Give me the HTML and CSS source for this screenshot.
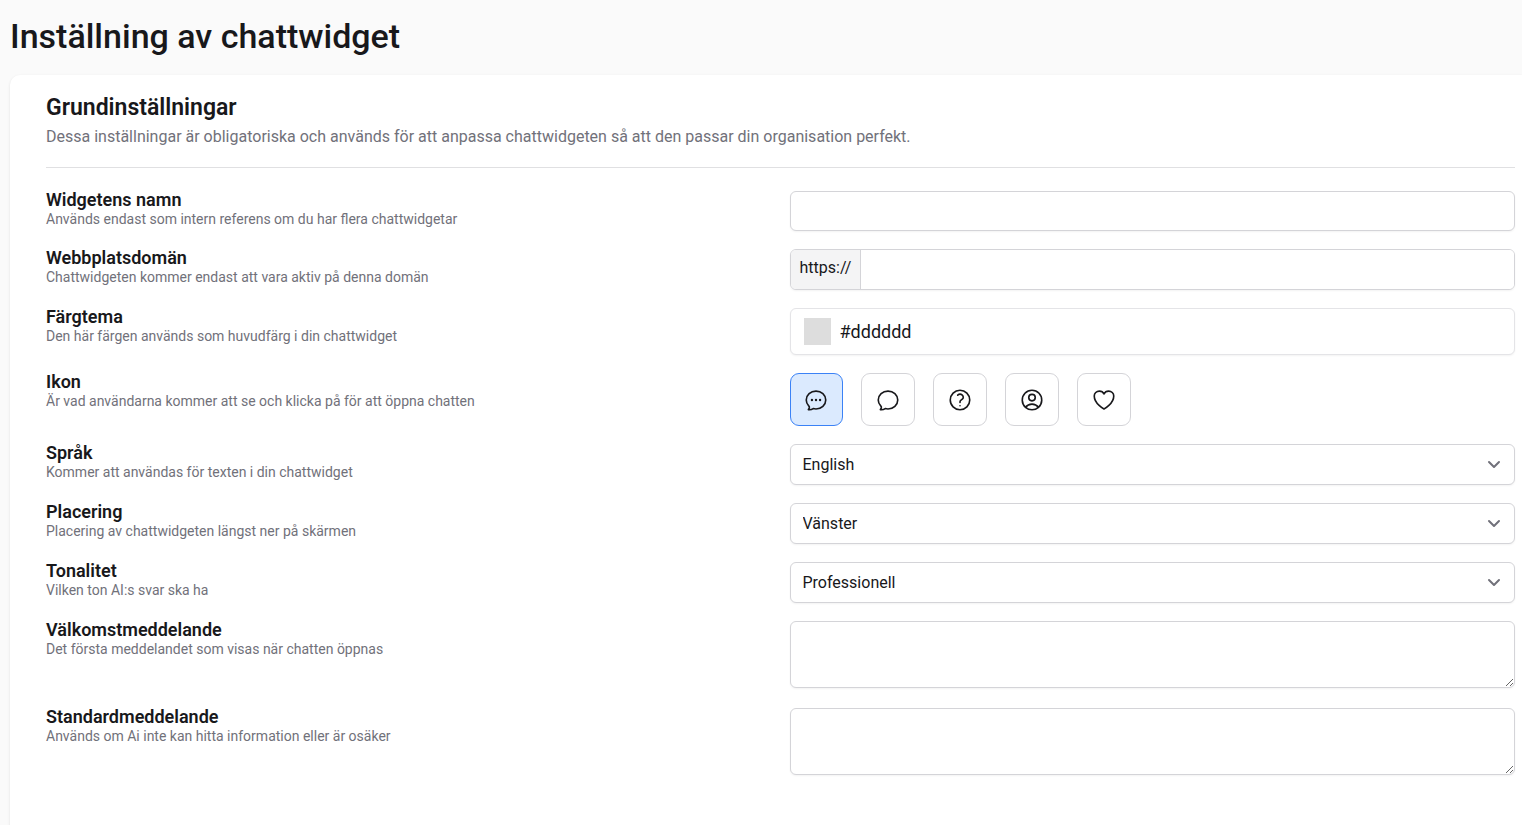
FILE: index.html
```html
<!DOCTYPE html>
<html lang="sv">
<head>
    <meta charset="UTF-8">
    <meta name="viewport" content="width=device-width, initial-scale=1.0">
    <title>Inställning av chattwidget</title>
    <link rel="stylesheet" href="styles.css">
</head>
<body>
    <h1>Inställning av chattwidget</h1>
    <form class="card">
        <div class="card-header">
            <h2>Grundinställningar</h2>
            <p>Dessa inställningar är obligatoriska och används för att anpassa chattwidgeten så att den passar din organisation perfekt.</p>
        </div>

        <div class="form-row">
            <div class="form-label">
                <label for="name">Widgetens namn</label>
                <p>Används endast som intern referens om du har flera chattwidgetar</p>
            </div>
            <input type="text" id="name" class="field">
        </div>

        <div class="form-row">
            <div class="form-label">
                <label for="domain">Webbplatsdomän</label>
                <p>Chattwidgeten kommer endast att vara aktiv på denna domän</p>
            </div>
            <div class="field url-field">
                <span class="prefix">https://</span>
                <input type="text" id="domain">
            </div>
        </div>

        <div class="form-row">
            <div class="form-label">
                <label for="color">Färgtema</label>
                <p>Den här färgen används som huvudfärg i din chattwidget</p>
            </div>
            <div class="field color-field">
                <input type="color" id="color" value="#dddddd">
                <span>#dddddd</span>
            </div>
        </div>

        <div class="form-row">
            <div class="form-label">
                <span class="label" id="iconLabel">Ikon</span>
                <p>Är vad användarna kommer att se och klicka på för att öppna chatten</p>
            </div>
            <div class="icons" role="radiogroup" aria-labelledby="iconLabel">
                <label class="icon-option">
                    <input type="radio" name="icon" value="chat-dots" aria-label="Chatt med punkter" checked>
                    <svg viewBox="0 0 24 24">
                        <path d="M12 20.25c4.97 0 9-3.694 9-8.25s-4.03-8.25-9-8.25S3 7.444 3 12c0 2.104.859 4.023 2.273 5.48.432.447.74 1.04.586 1.641a4.483 4.483 0 0 1-.923 1.785A5.969 5.969 0 0 0 6 21c1.282 0 2.47-.402 3.445-1.087.81.22 1.668.337 2.555.337Z"/>
                        <circle class="dot" cx="8.25" cy="12" r="1.1"/>
                        <circle class="dot" cx="12" cy="12" r="1.1"/>
                        <circle class="dot" cx="15.75" cy="12" r="1.1"/>
                    </svg>
                </label>
                <label class="icon-option">
                    <input type="radio" name="icon" value="chat" aria-label="Chatt">
                    <svg viewBox="0 0 24 24">
                        <path d="M12 20.25c4.97 0 9-3.694 9-8.25s-4.03-8.25-9-8.25S3 7.444 3 12c0 2.104.859 4.023 2.273 5.48.432.447.74 1.04.586 1.641a4.483 4.483 0 0 1-.923 1.785A5.969 5.969 0 0 0 6 21c1.282 0 2.47-.402 3.445-1.087.81.22 1.668.337 2.555.337Z"/>
                    </svg>
                </label>
                <label class="icon-option">
                    <input type="radio" name="icon" value="help" aria-label="Hjälp">
                    <svg viewBox="0 0 24 24">
                        <path d="M9.879 7.519c1.171-1.025 3.071-1.025 4.242 0 1.172 1.025 1.172 2.687 0 3.712-.203.179-.43.326-.67.442-.745.361-1.45.999-1.45 1.827v.75M21 12a9 9 0 1 1-18 0 9 9 0 0 1 18 0Zm-9 5.25h.008v.008H12v-.008Z"/>
                    </svg>
                </label>
                <label class="icon-option">
                    <input type="radio" name="icon" value="user" aria-label="Användare">
                    <svg viewBox="0 0 24 24">
                        <path d="M17.982 18.725A7.488 7.488 0 0 0 12 15.75a7.488 7.488 0 0 0-5.982 2.975m11.963 0a9 9 0 1 0-11.963 0m11.963 0A8.966 8.966 0 0 1 12 21a8.966 8.966 0 0 1-5.982-2.275M15 9.75a3 3 0 1 1-6 0 3 3 0 0 1 6 0Z"/>
                    </svg>
                </label>
                <label class="icon-option">
                    <input type="radio" name="icon" value="heart" aria-label="Hjärta">
                    <svg viewBox="0 0 24 24">
                        <path d="M21 8.25c0-2.485-2.099-4.5-4.688-4.5-1.935 0-3.597 1.126-4.312 2.733-.715-1.607-2.377-2.733-4.313-2.733C5.1 3.75 3 5.765 3 8.25c0 7.22 9 12 9 12s9-4.78 9-12Z"/>
                    </svg>
                </label>
            </div>
        </div>

        <div class="form-row">
            <div class="form-label">
                <label for="language">Språk</label>
                <p>Kommer att användas för texten i din chattwidget</p>
            </div>
            <div class="select-wrap">
                <select id="language" class="field">
                    <option>English</option>
                    <option>Svenska</option>
                </select>
                <svg viewBox="0 0 20 20"><path d="M5 8l5 5 5-5"/></svg>
            </div>
        </div>

        <div class="form-row">
            <div class="form-label">
                <label for="position">Placering</label>
                <p>Placering av chattwidgeten längst ner på skärmen</p>
            </div>
            <div class="select-wrap">
                <select id="position" class="field">
                    <option>Vänster</option>
                    <option>Höger</option>
                </select>
                <svg viewBox="0 0 20 20"><path d="M5 8l5 5 5-5"/></svg>
            </div>
        </div>

        <div class="form-row">
            <div class="form-label">
                <label for="tone">Tonalitet</label>
                <p>Vilken ton AI:s svar ska ha</p>
            </div>
            <div class="select-wrap">
                <select id="tone" class="field">
                    <option>Professionell</option>
                    <option>Vänlig</option>
                </select>
                <svg viewBox="0 0 20 20"><path d="M5 8l5 5 5-5"/></svg>
            </div>
        </div>

        <div class="form-row">
            <div class="form-label">
                <label for="welcome">Välkomstmeddelande</label>
                <p>Det första meddelandet som visas när chatten öppnas</p>
            </div>
            <textarea id="welcome" class="field"></textarea>
        </div>

        <div class="form-row">
            <div class="form-label">
                <label for="fallback">Standardmeddelande</label>
                <p>Används om Ai inte kan hitta information eller är osäker</p>
            </div>
            <textarea id="fallback" class="field"></textarea>
        </div>
    </form>
</body>
</html>
```
FILE: styles.css
```css
* {
    box-sizing: border-box;
}
body {
    font-family: Roboto, sans-serif;
    font-size: 16px;
    display: flex;
    flex-direction: column;
    min-height: 100vh;
    margin: 0;
    background-color: #fafafa;
    color: #18181b;
}
h1, h2, p {
    margin: 0;
}
h1 {
    font-size: 34px;
    font-weight: 500;
    line-height: 40px;
    padding: 16px 10px 19px;
}
.card {
    flex: 1;
    background: white;
    margin-left: 10px;
    padding: 18px 7px 50px 36px;
    border-radius: 10px 0 0 0;
    box-shadow: 0 1px 3px rgba(0,0,0,0.1);
}
.card-header {
    padding-bottom: 16px;
    margin-bottom: 23px;
    border-bottom: 1px solid #e0e0e2;
}
h2 {
    font-size: 23px;
    font-weight: 600;
    line-height: 30px;
}
.card-header p {
    line-height: 28px;
    color: #71717a;
}
.form-row {
    display: grid;
    grid-template-columns: 1fr 1fr;
    column-gap: 18px;
    align-items: start;
    margin-bottom: 18px;
}
.form-label label,
.label {
    display: block;
    font-size: 18px;
    font-weight: 600;
    line-height: 18px;
}
.form-label p {
    font-size: 14px;
    line-height: 20px;
    color: #71717a;
}
.field {
    display: block;
    width: 100%;
    height: 40px;
    margin: 0;
    padding: 0 12px;
    background: white;
    border: 1px solid #d4d4d8;
    border-radius: 6px;
    box-shadow: 0 1px 2px rgba(0,0,0,0.05);
    font: inherit;
    color: inherit;
}
.url-field {
    display: flex;
    height: 41px;
    padding: 0;
    overflow: hidden;
}
.prefix {
    padding: 8px 9px;
    line-height: 20px;
    background: #f4f4f5;
    border-right: 1px solid #d4d4d8;
}
.url-field input {
    flex: 1;
    min-width: 0;
    padding: 0 12px;
    border: none;
    font: inherit;
}
.color-field {
    display: flex;
    align-items: center;
    gap: 9px;
    height: 47px;
    padding: 0 13px;
    border-color: #e4e4e7;
    font-size: 18px;
}
.color-field input {
    appearance: none;
    width: 27px;
    height: 27px;
    padding: 0;
    border: none;
    background: none;
}
.color-field input::-webkit-color-swatch-wrapper {
    padding: 0;
}
.color-field input::-webkit-color-swatch {
    border: none;
}
.icons {
    display: flex;
    gap: 18px;
}
.icon-option {
    position: relative;
    display: flex;
    align-items: center;
    justify-content: center;
    width: 54px;
    height: 53px;
    border: 1px solid #d4d4d8;
    border-radius: 9px;
    cursor: pointer;
}
.icon-option:has(input:checked) {
    width: 53px;
    background: #dbeafe;
    border-color: #3b82f6;
}
.icon-option input {
    position: absolute;
    opacity: 0;
}
.icon-option svg {
    width: 26px;
    height: 26px;
    fill: none;
    stroke: currentColor;
    stroke-width: 1.5;
    stroke-linecap: round;
    stroke-linejoin: round;
}
.icon-option .dot {
    fill: currentColor;
    stroke: none;
}
.select-wrap {
    position: relative;
}
.select-wrap select {
    appearance: none;
    height: 41px;
}
.select-wrap svg {
    position: absolute;
    right: 11px;
    top: 10px;
    width: 20px;
    height: 20px;
    fill: none;
    stroke: #71717a;
    stroke-width: 2;
    stroke-linecap: round;
    stroke-linejoin: round;
    pointer-events: none;
}
textarea.field {
    height: 67px;
    margin-bottom: 2px;
    padding: 8px 12px;
    resize: vertical;
}
```
